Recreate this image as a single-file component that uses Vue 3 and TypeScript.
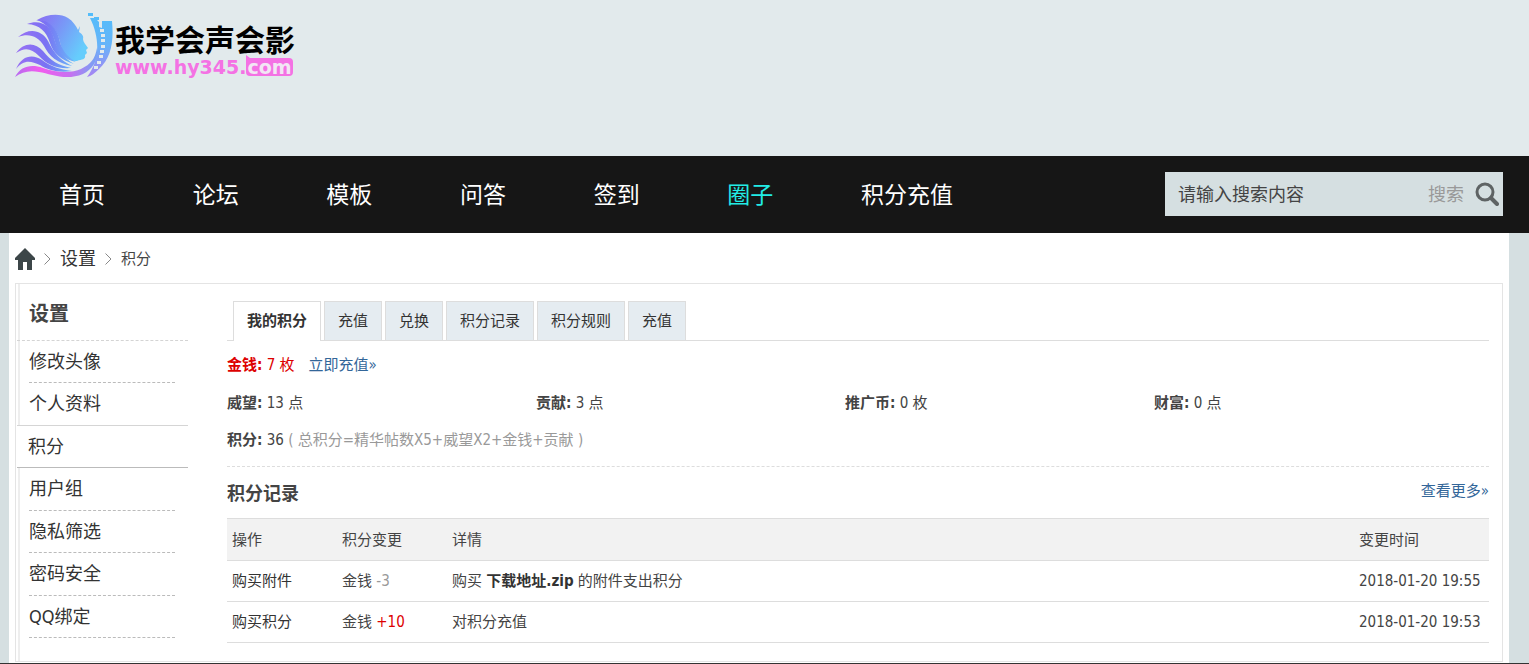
<script setup lang="ts">
import { ref } from 'vue'

interface NavItem { label: string; active?: boolean }
interface Stat { label: string; value: string }
interface CreditRecord { action: string; change: string; gain: boolean; before: string; file?: string; after?: string; time: string }

const nav: NavItem[] = [
  { label: '首页' },
  { label: '论坛' },
  { label: '模板' },
  { label: '问答' },
  { label: '签到' },
  { label: '圈子', active: true },
  { label: '积分充值' },
]
const settings = ['修改头像', '个人资料', '积分', '用户组', '隐私筛选', '密码安全', 'QQ绑定']
const currentSetting = '积分'
const tabs = ['我的积分', '充值', '兑换', '积分记录', '积分规则', '充值']
const currentTab = ref(0)
const stats: Stat[] = [
  { label: '威望:', value: '13 点' },
  { label: '贡献:', value: '3 点' },
  { label: '推广币:', value: '0 枚' },
  { label: '财富:', value: '0 点' },
]
const records: CreditRecord[] = [
  { action: '购买附件', change: '-3', gain: false, before: '购买', file: '下载地址.zip', after: '的附件支出积分', time: '2018-01-20 19:55' },
  { action: '购买积分', change: '+10', gain: true, before: '对积分充值', time: '2018-01-20 19:53' },
]
const keyword = ref('')
</script>

<template>
  <div class="page">
    <header class="masthead">
      <a class="logo" href="#">
        <svg class="logo-mark" viewBox="0 0 98 68" aria-hidden="true">
          <defs>
            <linearGradient id="hair" gradientUnits="userSpaceOnUse" x1="0" y1="0" x2="62" y2="0">
              <stop offset="0" stop-color="#9a70f4" />
              <stop offset="0.5" stop-color="#7a72f3" />
              <stop offset="1" stop-color="#66c0fa" />
            </linearGradient>
            <linearGradient id="face" gradientUnits="userSpaceOnUse" x1="20" y1="8" x2="68" y2="36">
              <stop offset="0" stop-color="#8a6cf3" />
              <stop offset="0.5" stop-color="#789af7" />
              <stop offset="1" stop-color="#66cdfc" />
            </linearGradient>
            <linearGradient id="sweep" gradientUnits="userSpaceOnUse" x1="0" y1="0" x2="84" y2="0">
              <stop offset="0" stop-color="#b66cf0" />
              <stop offset="0.3" stop-color="#f25cee" />
              <stop offset="0.65" stop-color="#c870f0" />
              <stop offset="1" stop-color="#6da8f5" />
            </linearGradient>
            <linearGradient id="film" x1="0" y1="0" x2="0" y2="1">
              <stop offset="0" stop-color="#52bdfa" />
              <stop offset="0.5" stop-color="#66b4f9" />
              <stop offset="1" stop-color="#a884f3" />
            </linearGradient>
          </defs>
          <path fill="url(#face)" d="M22 8C32 2 45 1 53 6C58 9 61 14 63 18L65 14L64 20C67 22 69 24 68 27C68 30 71 33 73 36L71 38L72 41L70 43C71 48 67 47 62 49C54 50 48 43 46 34C43 20 38 10 22 8Z" />
          <path fill="url(#hair)" d="M21 8C35 7 43 18 45 30C47 39 54 46 61 50C51 48 43 42 40 30C37 19 32 11 21 8Z" />
          <path fill="url(#hair)" d="M12 12C26 7 36 14 39 26C42 38 49 46 59 52C46 48 38 41 35 31C31 19 25 13 12 12Z" />
          <path fill="url(#hair)" d="M3 25C14 15 27 18 33 29C39 42 46 48 57 54C42 51 34 44 29 34C23 24 14 21 3 25Z" />
          <path fill="url(#hair)" d="M1 41C9 30 20 30 28 39C36 49 43 53 56 56C41 57 31 52 24 44C16 36 10 35 1 41Z" />
          <path fill="url(#hair)" d="M1 57C7 43 18 42 27 48C37 55 44 57 57 59C43 61 33 58 25 53C15 48 8 48 1 57Z" />
          <path fill="url(#sweep)" d="M0 65C6 54 16 52 28 56C42 61 57 61 66 57C76 52 80 47 82 36C84 47 78 57 68 62C51 69 36 62 24 60C14 58 7 60 0 65Z" />
          <path fill="url(#film)" d="M73 1h5v3h-5zM79 5h5v3h-5zM75 6h5l4 4v5l3 1V9H97C99 30 96 46 84 57C80 61 76 64 72 65C84 50 86 28 75 6Z" />
          <path fill="#e2eaec" d="M85 17h4v3h-4zM86 22h4v3h-4zM86 27h4v3h-4zM86 33h4v3h-4zM85 38h4v3h-4zM84 43h4v3h-4zM82 49h4v3h-4zM79 54h4v3h-4z" />
        </svg>
        <span class="logo-text">
          <span class="logo-name">我学会声会影</span>
          <span class="logo-url">www.hy345.<span class="logo-com">com</span></span>
        </span>
      </a>
    </header>

    <div class="navbar">
      <nav class="nav">
        <a v-for="item in nav" :key="item.label" href="#" :class="{ active: item.active }">{{ item.label }}</a>
      </nav>
      <form class="search" @submit.prevent>
        <input v-model="keyword" type="text" placeholder="请输入搜索内容" aria-label="请输入搜索内容" />
        <button type="submit">
          <span>搜索</span>
          <svg viewBox="0 0 24 24" aria-hidden="true">
            <circle cx="10" cy="10" r="8" fill="none" stroke="#5e6364" stroke-width="3" />
            <path d="M16 16L22 22" stroke="#5e6364" stroke-width="4" stroke-linecap="round" />
          </svg>
        </button>
      </form>
    </div>

    <main class="sheet">
      <nav class="crumbs">
        <a class="home" href="#" aria-label="首页">
          <svg viewBox="0 0 20 22" aria-hidden="true">
            <path fill="#3c4648" d="M10 0L20 10V12H17V22H12V14H8V22H3V12H0V10Z" />
          </svg>
        </a>
        <svg class="chev" viewBox="0 0 7 12" aria-hidden="true"><path d="M0.5 0.5L6 6L0.5 11.5" /></svg>
        <a class="crumb-main" href="#">设置</a>
        <svg class="chev" viewBox="0 0 7 12" aria-hidden="true"><path d="M0.5 0.5L6 6L0.5 11.5" /></svg>
        <span class="crumb-last">积分</span>
      </nav>

      <div class="panel">
        <aside class="side">
          <h2>设置</h2>
          <ul>
            <li v-for="s in settings" :key="s" :class="{ current: s === currentSetting }"><a href="#">{{ s }}</a></li>
          </ul>
        </aside>

        <section class="content">
          <div class="tabs">
            <button v-for="(t, i) in tabs" :key="i" type="button" :class="{ on: i === currentTab }" @click="currentTab = i">{{ t }}</button>
          </div>

          <div class="money"><span class="red"><b>金钱:</b> 7 枚</span><a href="#">立即充值»</a></div>
          <div class="stats">
            <div v-for="s in stats" :key="s.label"><b>{{ s.label }}</b> {{ s.value }}</div>
          </div>
          <div class="total"><b>积分:</b> 36 <span class="muted">( 总积分=精华帖数X5+威望X2+金钱+贡献 )</span></div>

          <div class="list-head">
            <h3>积分记录</h3>
            <a href="#">查看更多»</a>
          </div>
          <table>
            <colgroup>
              <col class="c-action" />
              <col class="c-change" />
              <col />
              <col class="c-time" />
            </colgroup>
            <thead>
              <tr><th>操作</th><th>积分变更</th><th>详情</th><th>变更时间</th></tr>
            </thead>
            <tbody>
              <tr v-for="r in records" :key="r.time">
                <td><a href="#">{{ r.action }}</a></td>
                <td>金钱 <span :class="r.gain ? 'red' : 'muted'">{{ r.change }}</span></td>
                <td>{{ r.before }} <a v-if="r.file" href="#"><b>{{ r.file }}</b></a> {{ r.after }}</td>
                <td>{{ r.time }}</td>
              </tr>
            </tbody>
          </table>
        </section>
      </div>
    </main>
    <div class="baseline"></div>
  </div>
</template>

<style>
body {
  margin: 0;
  background: #d5dfe1;
}
</style>

<style scoped>
.page {
  font: 15px/20px "DejaVu Sans Condensed", "Noto Sans CJK SC", sans-serif;
  color: #444;
}
.page *,
.page *::before {
  box-sizing: border-box;
}
a {
  color: #333;
  text-decoration: none;
}
ul,
h2,
h3 {
  margin: 0;
  padding: 0;
  list-style: none;
}
input,
button {
  font: inherit;
  color: inherit;
  border: 0;
  padding: 0;
  background: none;
}
.red {
  color: #d00;
}
.muted {
  color: #999;
}

.masthead {
  height: 156px;
  padding: 12px 15px;
  background: #e2eaec;
}
.logo {
  display: inline-flex;
  align-items: flex-start;
  gap: 2px;
}
.logo-mark {
  width: 98px;
  height: 68px;
}
.logo-text {
  display: flex;
  flex-direction: column;
  padding-top: 11px;
}
.logo-name {
  font: bold 30px/35px "DejaVu Sans", "Noto Sans CJK SC", sans-serif;
  color: #000;
}
.logo-url {
  display: flex;
  font: bold 19px/18px "DejaVu Sans", sans-serif;
  color: #f472e4;
}
.logo-com {
  position: relative;
  background: #f472e4;
  color: #f2e6f4;
  border-radius: 0 4px 4px 4px;
  padding: 0 1px;
}
.logo-com::before {
  content: "";
  position: absolute;
  left: 0;
  top: -3px;
  border-left: 4px solid #f472e4;
  border-top: 3px solid transparent;
}

.navbar {
  display: flex;
  justify-content: space-between;
  align-items: center;
  height: 77px;
  padding: 0 26px 1px 59px;
  background: #161616;
}
.nav {
  display: flex;
  justify-content: space-between;
  width: 894px;
  padding-top: 2px;
}
.nav a {
  font-size: 23px;
  line-height: 32px;
  color: #fff;
}
.nav a.active {
  color: #22ece6;
}
.search {
  display: flex;
  align-items: center;
  width: 338px;
  height: 44px;
  padding: 0 4px 0 13px;
  background: #d5dfe1;
  font-size: 18px;
}
.search input {
  flex: 1;
  min-width: 0;
  height: 44px;
  outline: 0;
}
.search input::placeholder {
  color: #444;
  opacity: 1;
}
.search button {
  display: flex;
  align-items: center;
  gap: 11px;
  color: #999;
}
.search button span {
  padding-top: 2px;
}
.search svg {
  width: 24px;
  height: 24px;
}

.sheet {
  margin: 0 20px 0 9px;
  padding: 0 6px 1px;
  background: #fff;
}
.crumbs {
  display: flex;
  align-items: center;
  gap: 9px;
  height: 50px;
  padding-top: 2px;
}
.home svg {
  display: block;
  width: 20px;
  height: 22px;
}
.chev {
  width: 7px;
  height: 12px;
  fill: none;
  stroke: #888;
}
.crumb-main {
  font-size: 18px;
}
.panel {
  display: flex;
  gap: 39px;
  border: 1px solid #e4e4e4;
  padding-right: 13px;
  min-height: 379px;
}
.side {
  width: 172px;
  padding-left: 1px;
  background: linear-gradient(#eee, #eee) 2px 0 / 2px 100% no-repeat;
}
.side h2 {
  height: 57px;
  padding-left: 12px;
  border-bottom: 1px dashed #d4d4d4;
  font-size: 20px;
  line-height: 60px;
}
.side ul {
  display: grid;
  grid-auto-rows: 1fr;
  height: 297px;
}
.side li {
  padding: 0 13px 0 12px;
}
.side li a {
  display: block;
  height: 100%;
  border-bottom: 1px dashed #bbb;
  font-size: 18px;
  line-height: 41px;
}
.side li.current {
  margin-top: -1px;
  padding: 0;
  background: #fff;
}
.side li.current a {
  padding-left: 11px;
  border-top: 1px solid #d5d5d5;
  border-bottom: 1px solid #bbb;
}
.content {
  flex: 1;
  min-width: 0;
  padding-top: 17px;
}
.tabs {
  display: flex;
  gap: 3px;
  height: 40px;
  padding-left: 6px;
  border-bottom: 1px solid #ddd;
}
.tabs button {
  height: 39px;
  padding: 0 13px;
  border: 1px solid #ddd;
  border-bottom: 0;
  background: #e5ecf1;
  color: #333;
  cursor: pointer;
}
.tabs button.on {
  height: 40px;
  padding-bottom: 2px;
  background: #fff;
  font-weight: bold;
}
.money,
.stats {
  line-height: 38px;
}
.money {
  display: flex;
  gap: 14px;
  padding-top: 5px;
}
.money a,
.list-head a {
  color: #336699;
}
.stats {
  display: grid;
  grid-template-columns: repeat(4, 309px);
}
.total {
  padding-bottom: 8px;
  border-bottom: 1px dashed #ddd;
  line-height: 36px;
}
.list-head {
  display: flex;
  justify-content: space-between;
  height: 51px;
  line-height: 48px;
}
.list-head h3 {
  font-size: 18px;
  line-height: 54px;
}
table {
  width: 100%;
  border-collapse: collapse;
  table-layout: fixed;
  border-top: 1px solid #ddd;
}
.c-action,
.c-change {
  width: 110px;
}
.c-time {
  width: 135px;
}
th,
td {
  height: 41px;
  padding: 0 5px;
  border-bottom: 1px solid #ddd;
  text-align: left;
  font-weight: normal;
}
th {
  height: 42px;
  background: #f2f2f2;
}
.baseline {
  height: 1px;
  background: #333;
}
</style>
